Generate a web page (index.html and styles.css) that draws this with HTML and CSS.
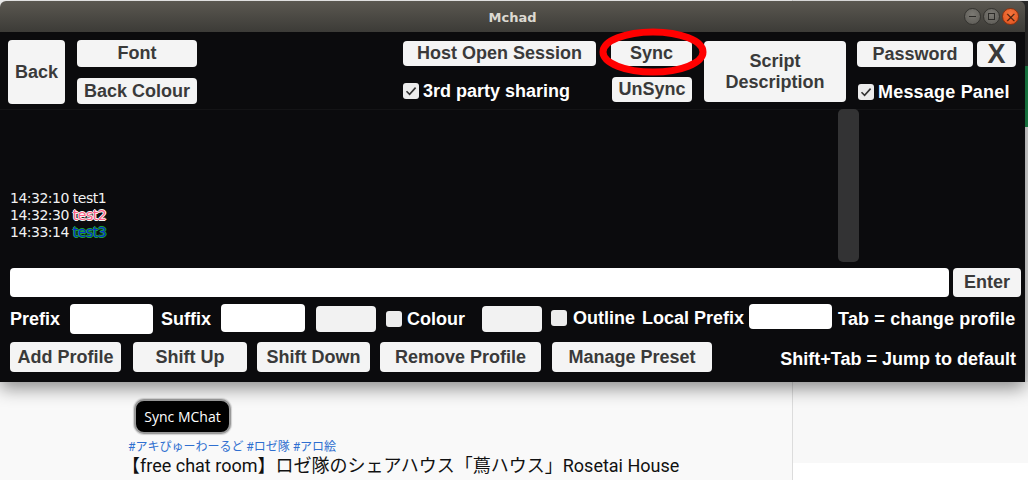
FILE: index.html
```html
<!DOCTYPE html>
<html lang="ja">
<head>
<meta charset="utf-8">
<title>Mchad</title>
<link rel="stylesheet" href="styles.css">
</head>
<body>
<div class="page">
  <div class="main">
    <div class="meta">
      <button class="sync-mchat">Sync MChat</button>
      <div class="tags">#アキぴゅーわーるど #ロゼ隊 #アロ絵</div>
      <h1 class="video-title">【free chat room】ロゼ隊のシェアハウス「蔦ハウス」Rosetai House</h1>
    </div>
  </div>
  <aside class="side">
    <div class="side-top"></div>
    <div class="side-green"></div>
    <div class="side-chat"></div>
    <div class="side-rest"></div>
  </aside>
</div>

<div class="window">
  <div class="titlebar">
    <div></div>
    <div class="wtitle">Mchad</div>
    <div class="wctrls">
      <span class="wbtn wmin"><i></i></span>
      <span class="wbtn wmax"><i></i></span>
      <span class="wbtn wclose">×</span>
    </div>
  </div>
  <div class="wbody">
    <div class="header">
      <button class="btn b-back">Back</button>
      <div class="col col-font">
        <button class="btn b-font">Font</button>
        <button class="btn b-bcol">Back Colour</button>
      </div>
      <div class="col col-host">
        <button class="btn b-host">Host Open Session</button>
        <label class="chk-row"><span class="chk on"><svg viewBox="0 0 16 16"><polyline points="3.5,8.3 6.6,11.4 12.6,4.6"/></svg></span>3rd party sharing</label>
      </div>
      <div class="col col-sync">
        <button class="btn b-sync">Sync</button>
        <button class="btn b-unsync">UnSync</button>
      </div>
      <button class="btn b-script">Script<br>Description</button>
      <div class="col col-right">
        <div class="pw-row">
          <button class="btn b-pw">Password</button>
          <button class="btn b-x">X</button>
        </div>
        <label class="chk-row mp"><span class="chk on"><svg viewBox="0 0 16 16"><polyline points="3.5,8.3 6.6,11.4 12.6,4.6"/></svg></span>Message Panel</label>
      </div>
    </div>

    <div class="chat">
      <div class="messages">
        <div class="msg">14:32:10 test1</div>
        <div class="msg">14:32:30 <span class="t2">test2</span></div>
        <div class="msg">14:33:14 <span class="t3">test3</span></div>
      </div>
      <div class="scrollbar"></div>
    </div>

    <div class="input-row">
      <div class="field main-field"></div>
      <button class="btn b-enter">Enter</button>
    </div>

    <div class="prefix-row">
      <span class="lbl">Prefix</span>
      <div class="field f-prefix"></div>
      <span class="lbl l-suffix">Suffix</span>
      <div class="field f-suffix"></div>
      <div class="swatch s1"></div>
      <span class="chk off c-colour"></span>
      <span class="lbl l-colour">Colour</span>
      <div class="swatch s2"></div>
      <span class="chk off c-outline"></span>
      <span class="lbl l-outline">Outline</span>
      <span class="lbl l-local">Local Prefix</span>
      <div class="field f-local"></div>
      <span class="lbl l-tab">Tab = change profile</span>
    </div>

    <div class="btn-row">
      <button class="btn b-add">Add Profile</button>
      <button class="btn b-up">Shift Up</button>
      <button class="btn b-down">Shift Down</button>
      <button class="btn b-remove">Remove Profile</button>
      <button class="btn b-preset">Manage Preset</button>
      <span class="lbl l-shift">Shift+Tab = Jump to default</span>
    </div>
  </div>
  <svg class="annot" viewBox="0 0 120 56" width="120" height="56"><ellipse cx="60" cy="26" rx="50" ry="20" /></svg>
</div>
</body>
</html>
```

FILE: styles.css
```css
* { box-sizing: border-box; }
html, body { margin: 0; padding: 0; }
body {
  width: 1028px;
  height: 480px;
  overflow: hidden;
  position: relative;
  background: #f9f9f9;
  font-family: "Liberation Sans", Arial, sans-serif;
}

/* underlying web page */
.page { display: flex; height: 480px; }
.main {
  width: 793px;
  border-right: 1px solid #dcdcdc;
  background: #f9f9f9;
}
.meta { padding-top: 399px; }
.sync-mchat {
  display: flex;
  align-items: center;
  justify-content: center;
  margin-left: 134px;
  width: 97px;
  height: 35px;
  padding: 0;
  background: #000;
  color: #fff;
  border: 2px solid #9a9a9a;
  border-radius: 10px;
  box-shadow: 0 0 1px 1px #d0d0d0;
  font-family: "Open Sans", "Noto Sans", sans-serif;
  font-size: 14px;
}
.tags {
  margin: 5px 0 0 128px;
  font-family: Roboto, "Noto Sans CJK JP", sans-serif;
  font-size: 12px;
  line-height: 16px;
  color: #2f6fd0;
}
.video-title {
  margin: 0 0 0 122px;
  font-family: Roboto, "Noto Sans CJK JP", sans-serif;
  font-weight: 400;
  font-size: 18px;
  line-height: 21px;
  color: #111;
  white-space: nowrap;
}
.side { width: 235px; display: flex; flex-direction: column; background: #fff; }
.side-top { height: 66px; background: linear-gradient(#eeeeee 0 1px, #2b2b2b 1px); }
.side-green { height: 61px; background: #1c8a4c; }
.side-chat { height: 255px; background: #e6e6e6; }
.side-rest { height: 81px; background: #f8f8f8; }

/* desktop window */
.window {
  position: absolute;
  top: 1px;
  left: 0;
  width: 1025px;
  height: 381px;
  display: flex;
  flex-direction: column;
  border-radius: 6px 6px 0 0;
  box-shadow: 0 6px 18px rgba(0, 0, 0, 0.45);
}
.titlebar {
  height: 31px;
  flex: none;
  display: grid;
  grid-template-columns: 1fr auto 1fr;
  align-items: center;
  background: linear-gradient(#5b5851, #3c3b37);
  border-radius: 6px 6px 0 0;
}
.wtitle {
  font-family: "DejaVu Sans", sans-serif;
  font-weight: bold;
  font-size: 13px;
  color: #dcd9d1;
  padding-top: 1px;
}
.wctrls {
  justify-self: end;
  display: flex;
  gap: 2px;
  padding-right: 6px;
}
.wbtn {
  width: 17px;
  height: 17px;
  border-radius: 50%;
  display: flex;
  align-items: center;
  justify-content: center;
  border: 1px solid #34332f;
  background: radial-gradient(circle at 50% 35%, #7b7973, #5a5853);
}
.wmin i { display: block; width: 7px; height: 1.5px; background: #2c2b28; }
.wmax i { display: block; width: 7px; height: 7px; border: 1.5px solid #2c2b28; }
.wclose {
  background: radial-gradient(circle at 50% 35%, #f4773f, #e0501c);
  border-color: #8a3210;
  color: #4a1a08;
  font-family: "DejaVu Sans", sans-serif;
  font-size: 14px;
  line-height: 1;
}

.wbody {
  flex: 1;
  background: #0b0b0d;
  display: flex;
  flex-direction: column;
}

.btn {
  display: flex;
  align-items: center;
  justify-content: center;
  padding: 0;
  border: none;
  border-radius: 4px;
  background: #f4f4f4;
  color: #3a3a3a;
  font-family: "Liberation Sans", Arial, sans-serif;
  font-weight: bold;
  font-size: 18px;
  line-height: 21px;
  white-space: nowrap;
}
.header {
  height: 78px;
  flex: none;
  display: flex;
  align-items: flex-start;
  padding: 8px 0 0 8px;
  border-bottom: 1px solid #141416;
}
.col { display: flex; flex-direction: column; }
.b-back { width: 57px; height: 64px; }
.col-font { margin-left: 12px; width: 120px; }
.b-font { height: 27px; }
.b-bcol { height: 26px; margin-top: 11px; }
.col-host { margin-left: 206px; margin-top: 1px; width: 193px; }
.b-host { height: 25px; }
.chk-row {
  display: flex;
  align-items: center;
  gap: 4px;
  color: #fff;
  font-weight: bold;
  font-size: 18px;
  line-height: 20px;
}
.col-host .chk-row { margin-top: 15px; }
.chk {
  width: 16px;
  height: 16px;
  flex: none;
  border-radius: 3px;
  background: #ececec;
  display: flex;
}
.chk svg { width: 16px; height: 16px; }
.chk polyline { fill: none; stroke: #333; stroke-width: 1.6; }
.col-sync { margin-left: 15px; margin-top: 1px; width: 81px; }
.b-sync { height: 25px; }
.b-unsync { height: 25px; margin-top: 11px; margin-left: 1px; width: 80px; }
.b-script { margin-left: 12px; margin-top: 1px; width: 142px; height: 61px; text-align: center; }
.col-right { margin-left: 11px; margin-top: 1px; }
.pw-row { display: flex; gap: 4px; }
.b-pw { width: 116px; height: 26px; }
.b-x { width: 39px; height: 26px; font-size: 27px; }
.col-right .chk-row { margin-top: 15px; margin-left: 1px; letter-spacing: 0.2px; }

.chat {
  height: 153px;
  flex: none;
  display: flex;
  margin-top: -1px;
}
.messages {
  width: 838px;
  padding: 0 0 21px 10px;
  display: flex;
  flex-direction: column;
  justify-content: flex-end;
  font-family: "DejaVu Sans", sans-serif;
  font-size: 14px;
  letter-spacing: -0.5px;
  line-height: 17px;
  color: #f2f2f2;
}
.t2 {
  color: #ff5f86;
  text-shadow: 1px 0 0 #f4f4f4, -1px 0 0 #f4f4f4, 0 1px 0 #f4f4f4, 0 -1px 0 #f4f4f4;
}
.t3 {
  color: #0a2ccc;
  text-shadow: 1px 0 0 #19a33a, -1px 0 0 #19a33a, 0 1px 0 #19a33a, 0 -1px 0 #19a33a;
}
.scrollbar {
  width: 21px;
  height: 153px;
  background: #333334;
  border-radius: 5px;
}

.input-row {
  margin-top: 6px;
  height: 29px;
  flex: none;
  display: flex;
  padding-left: 10px;
}
.field { background: #fff; border-radius: 4px; }
.main-field { width: 939px; }
.b-enter { margin-left: 4px; width: 68px; }

.prefix-row {
  margin-top: 7px;
  height: 30px;
  flex: none;
  display: flex;
  align-items: center;
  padding-left: 10px;
}
.lbl {
  color: #fff;
  font-weight: bold;
  font-size: 18px;
  line-height: 20px;
  white-space: nowrap;
}
.f-prefix { margin-left: 10px; width: 83px; height: 30px; }
.l-suffix { margin-left: 8px; }
.f-suffix { margin-left: 10px; width: 84px; height: 28px; margin-top: -2px; }
.swatch { background: #f2f2f2; border-radius: 4px; width: 60px; height: 26px; }
.s1 { margin-left: 11px; }
.c-colour { margin-left: 10px; }
.l-colour { margin-left: 5px; }
.s2 { margin-left: 17px; }
.c-outline { margin-left: 9px; margin-top: -3px; }
.l-outline { margin-left: 6px; margin-top: -3px; }
.l-local { margin-left: 7px; margin-top: -3px; }
.f-local { margin-left: 5px; width: 83px; height: 25px; margin-top: -5px; }
.l-tab { margin-left: 6px; letter-spacing: 0.15px; }

.btn-row {
  margin-top: 8px;
  height: 30px;
  flex: none;
  display: flex;
  align-items: center;
  padding-left: 10px;
}
.btn-row .btn { height: 30px; }
.b-add { width: 111px; }
.b-up { width: 114px; margin-left: 12px; }
.b-down { width: 113px; margin-left: 10px; }
.b-remove { width: 161px; margin-left: 10px; }
.b-preset { width: 160px; margin-left: 11px; }
.l-shift { margin-left: auto; margin-right: 9px; margin-top: 3px; }

.annot {
  position: absolute;
  left: 593px;
  top: 25px;
  overflow: visible;
}
.annot ellipse { fill: none; stroke: #ff0000; stroke-width: 7; }
```
